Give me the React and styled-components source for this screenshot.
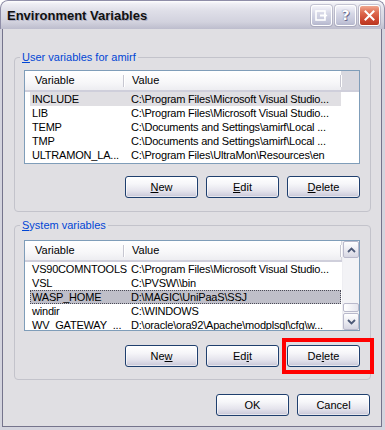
import React from 'react';
import styled, { createGlobalStyle, css } from 'styled-components';

const Global = createGlobalStyle`
  html, body { margin: 0; padding: 0; background: #ffffff; }
  body { font-family: "Liberation Sans", Arial, sans-serif; font-size: 11px; color: #000; }
  * { box-sizing: border-box; }
`;

const Window = styled.div`
  width: 385px;
  height: 430px;
  display: flex;
  flex-direction: column;
  background: #d4d4de;
  border-radius: 8px 8px 0 0;
  overflow: hidden;
`;

const TitleBar = styled.div`
  height: 29px;
  flex: none;
  display: flex;
  align-items: center;
  padding: 0 4px 0 6px;
  border: 1px solid #8f8ea8;
  border-bottom: none;
  border-radius: 8px 8px 0 0;
  background: linear-gradient(to bottom, #ffffff 0%, #eeeef4 10%, #dfdfe8 35%, #d2d2de 75%, #bdbdcd 100%);
`;

const Title = styled.div`
  flex: 1;
  font-family: "Liberation Sans", Arial, sans-serif;
  font-weight: bold;
  font-size: 13px;
  color: #111;
  text-shadow: 1px 1px 0 rgba(160, 160, 180, 0.7);
  padding-top: 1px;
`;

const CaptionButtons = styled.div`
  display: flex;
  gap: 3px;
`;

const CaptionButton = styled.div`
  width: 21px;
  height: 21px;
  border-radius: 3px;
  border: 1px solid #ffffff;
  display: flex;
  align-items: center;
  justify-content: center;
  box-shadow: 0 0 0 1px rgba(120, 120, 150, 0.35);
  ${(p) =>
    p.$close
      ? css`
          background: linear-gradient(to bottom, #f0a890 0%, #de6a50 35%, #c8402a 80%, #b8361f 100%);
        `
      : css`
          background: linear-gradient(to bottom, #f4f4fa 0%, #d6d7e6 40%, #c2c4d8 85%, #b4b6cc 100%);
        `}
`;

const HelpGlyph = styled.span`
  font-family: "DejaVu Sans", sans-serif;
  font-weight: bold;
  font-size: 14px;
  color: #ffffff;
  line-height: 1;
  text-shadow: 0 0 1px #55557a, 1px 1px 0 #6e6e90;
`;

const Frame = styled.div`
  flex: 1;
  display: flex;
  padding: 0 3px 3px 2px;
  background: #d4d4de;
`;

const Body = styled.div`
  flex: 1;
  display: flex;
  flex-direction: column;
  background: #e0dfe3;
  border: 1px solid #75748c;
  border-top: none;
  padding: 28px 10px 0 11px;
`;

const Group = styled.div`
  position: relative;
  height: 155px;
  border: 1px solid #c3c3cb;
  border-radius: 4px;
  padding: ${(p) => p.$pad};
  display: flex;
  flex-direction: column;
  & + & {
    margin-top: 13px;
  }
`;

const Legend = styled.div`
  position: absolute;
  top: -7px;
  left: 5px;
  padding: 0 2px;
  line-height: 13px;
  background: #e0dfe3;
  color: #0046d5;
  white-space: nowrap;
`;

const U = styled.span`
  text-decoration: underline;
  text-underline-offset: 1px;
`;

const ListView = styled.div`
  height: ${(p) => p.$h}px;
  border: 1px solid #7f9db9;
  background: #ffffff;
  display: flex;
  overflow: hidden;
  flex: none;
`;

const ListBody = styled.div`
  flex: 1;
  display: flex;
  flex-direction: column;
  min-width: 0;
`;

const Header = styled.div`
  height: 21px;
  flex: none;
  display: flex;
  background: linear-gradient(to bottom, #ffffff 0%, #f7f7f9 60%, #ededf1 100%);
  border-bottom: 2px solid #cfcfdb;
`;

const HeaderCell = styled.div`
  width: ${(p) => p.$w}px;
  flex: none;
  position: relative;
  padding-left: ${(p) => p.$pl}px;
  line-height: 19px;
  white-space: nowrap;
  &::after {
    content: '';
    position: absolute;
    right: 0;
    top: 4px;
    bottom: 3px;
    width: 1px;
    background: #c7c7d1;
    box-shadow: 1px 0 0 #ffffff;
  }
`;

const HeaderFiller = styled.div`
  flex: 1;
  background: #d8d8df;
`;

const Rows = styled.div`
  padding-left: 5px;
  display: flex;
  flex-direction: column;
`;

const Row = styled.div`
  width: 311px;
  height: 14px;
  flex: none;
  display: flex;
  line-height: 14px;
  white-space: nowrap;
  letter-spacing: -0.2px;
  ${(p) =>
    p.$sel === 'inactive' &&
    css`
      background: #e0dfe3;
    `}
  ${(p) =>
    p.$sel === 'focus' &&
    css`
      background: #bfbfc9;
      outline: 1px dotted #4a4a56;
      outline-offset: -1px;
    `}
`;

const Cell = styled.div`
  width: ${(p) => (p.$w ? `${p.$w}px` : 'auto')};
  flex: ${(p) => (p.$w ? 'none' : '1')};
  padding-left: 2px;
  overflow: hidden;
`;

const ScrollBar = styled.div`
  width: 17px;
  flex: none;
  display: flex;
  flex-direction: column;
  background: #f3f3f6;
  border-left: 1px solid #eeeef2;
`;

const ScrollButton = styled.div`
  height: 17px;
  flex: none;
  border: 1px solid #b9b9cb;
  border-radius: 2px;
  background: linear-gradient(to bottom, #ffffff 0%, #ececf2 50%, #d6d6e2 100%);
  display: flex;
  align-items: center;
  justify-content: center;
`;

const Track = styled.div`
  flex: 1;
  display: flex;
  flex-direction: column;
  justify-content: flex-end;
  padding-bottom: 1px;
`;

const Thumb = styled.div`
  height: 9px;
  border: 1px solid #b9b9cb;
  border-radius: 2px;
  background: linear-gradient(to right, #ffffff, #e6e6ee);
`;

const ButtonRow = styled.div`
  display: flex;
  justify-content: flex-end;
  gap: 8px;
  margin-top: ${(p) => p.$mt}px;
`;

const Button = styled.div`
  width: 73px;
  height: 22px;
  border: 1px solid #1f3f6e;
  border-radius: 3px;
  background: linear-gradient(to bottom, #ffffff 0%, #f6f6f9 35%, #e4e3ec 70%, #cfcedd 92%, #bdbccc 100%);
  box-shadow: inset 0 0 0 1px rgba(255, 255, 255, 0.6);
  display: flex;
  align-items: center;
  justify-content: center;
  color: #000;
  font-size: 11px;
`;

const HighlightWrap = styled.div`
  position: relative;
`;

const RedBox = styled.div`
  position: absolute;
  left: -5px;
  top: -7px;
  width: 92px;
  height: 36px;
  border: 4px solid #ff0000;
  pointer-events: none;
  z-index: 2;
`;

const Footer = styled.div`
  display: flex;
  justify-content: flex-end;
  gap: 8px;
  margin-top: 14px;
  padding-right: 1px;
`;

const userVars = [
  ['INCLUDE', 'C:\\Program Files\\Microsoft Visual Studio...', 'inactive'],
  ['LIB', 'C:\\Program Files\\Microsoft Visual Studio...'],
  ['TEMP', 'C:\\Documents and Settings\\amirf\\Local ...'],
  ['TMP', 'C:\\Documents and Settings\\amirf\\Local ...'],
  ['ULTRAMON_LA...', 'C:\\Program Files\\UltraMon\\Resources\\en'],
];

const sysVars = [
  ['VS90COMNTOOLS', 'C:\\Program Files\\Microsoft Visual Studio...'],
  ['VSL', 'C:\\PVSW\\\\bin'],
  ['WASP_HOME', 'D:\\MAGIC\\UniPaaS\\SSJ', 'focus'],
  ['windir', 'C:\\WINDOWS'],
  ['WV_GATEWAY_...', 'D:\\oracle\\ora92\\Apache\\modplsql\\cfg\\w...'],
];

function Chevron({ up }) {
  return (
    <svg width="9" height="6" viewBox="0 0 9 6">
      <polyline
        points={up ? '1,5 4.5,1.5 8,5' : '1,1 4.5,4.5 8,1'}
        fill="none"
        stroke="#4d5a78"
        strokeWidth="1.8"
      />
    </svg>
  );
}

function VarList({ rows, height, scroll }) {
  return (
    <ListView $h={height}>
      <ListBody>
        <Header>
          <HeaderCell $w={99} $pl={10}>Variable</HeaderCell>
          <HeaderCell $w={217} $pl={8}>Value</HeaderCell>
          <HeaderFiller />
        </Header>
        <Rows>
          {rows.map(([name, value, sel]) => (
            <Row key={name} $sel={sel}>
              <Cell $w={99}>{name}</Cell>
              <Cell>{value}</Cell>
            </Row>
          ))}
        </Rows>
      </ListBody>
      {scroll && (
        <ScrollBar>
          <ScrollButton>
            <Chevron up />
          </ScrollButton>
          <Track>
            <Thumb />
          </Track>
          <ScrollButton>
            <Chevron />
          </ScrollButton>
        </ScrollBar>
      )}
    </ListView>
  );
}

export default function App() {
  return (
    <>
      <Global />
      <Window>
        <TitleBar>
          <Title>Environment Variables</Title>
          <CaptionButtons>
            <CaptionButton>
              <svg width="13" height="11" viewBox="0 0 13 11">
                <rect x="1" y="1" width="9" height="9" fill="none" stroke="#ffffff" strokeWidth="1.6" />
                <path d="M5 4.5 H9 V2.8 L12.5 5.5 L9 8.2 V6.5 H5 Z" fill="#ffffff" />
              </svg>
            </CaptionButton>
            <CaptionButton>
              <HelpGlyph>?</HelpGlyph>
            </CaptionButton>
            <CaptionButton $close>
              <svg width="11" height="11" viewBox="0 0 11 11">
                <path d="M1.5 1.5 L9.5 9.5 M9.5 1.5 L1.5 9.5" stroke="#ffffff" strokeWidth="2" strokeLinecap="square" />
              </svg>
            </CaptionButton>
          </CaptionButtons>
        </TitleBar>
        <Frame>
          <Body>
            <Group $pad="12px 10px 0 9px">
              <Legend>
                <U>U</U>ser variables for amirf
              </Legend>
              <VarList rows={userVars} height={94} />
              <ButtonRow $mt={12}>
                <Button>
                  <U>N</U>ew
                </Button>
                <Button>
                  <U>E</U>dit
                </Button>
                <Button>
                  <U>D</U>elete
                </Button>
              </ButtonRow>
            </Group>
            <Group $pad="14px 10px 0 9px">
              <Legend>
                <U>S</U>ystem variables
              </Legend>
              <VarList rows={sysVars} height={91} scroll />
              <ButtonRow $mt={14}>
                <Button>
                  Ne<U>w</U>
                </Button>
                <Button>
                  Ed<U>i</U>t
                </Button>
                <HighlightWrap>
                  <Button>
                    De<U>l</U>ete
                  </Button>
                  <RedBox />
                </HighlightWrap>
              </ButtonRow>
            </Group>
            <Footer>
              <Button>OK</Button>
              <Button>Cancel</Button>
            </Footer>
          </Body>
        </Frame>
      </Window>
    </>
  );
}
